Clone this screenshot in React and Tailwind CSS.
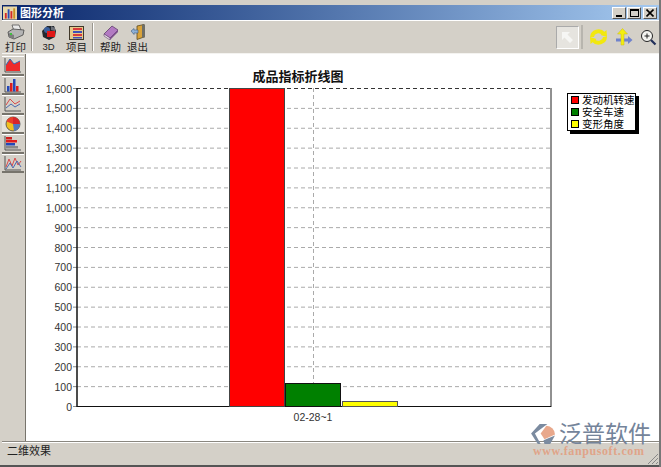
const font = { fontFamily: '"Liberation Sans", "Noto Sans CJK SC", sans-serif' };

const ticks = Array.from({ length: 17 }, (_, i) => i * 100);
const tickY = (v) => 406.5 - (v / 1600) * 318;

const PrintIcon = () => (
  <svg width="18" height="16" viewBox="0 0 18 16">
    <path d="M5 1 L12 1 L14 6 L7 7 Z" fill="#e8e8e8" stroke="#555" strokeWidth="0.8" />
    <path d="M1 8 L6 5 L17 6 L16 11 L7 15 L2 13 Z" fill="#b4b4b4" stroke="#444" strokeWidth="0.8" />
    <path d="M2 9 L7 11 L7 15 L2 13 Z" fill="#7d7d7d" />
    <rect x="3" y="9" width="2" height="2" fill="#3fbf3f" />
  </svg>
);

const CubeIcon = () => (
  <svg width="16" height="15" viewBox="0 0 16 15">
    <path d="M1 6 L6 1 L13 1 L15 6 L14 12 L8 15 L2 12 Z" fill="#24282e" />
    <circle cx="6" cy="5" r="3" fill="#3a5f9c" />
    <rect x="6" y="6" width="8" height="6" fill="#e01818" />
    <path d="M10 1 L14 3 L14 6 L10 5 Z" fill="#6b6f78" />
  </svg>
);

const ItemsIcon = () => (
  <svg width="15" height="14" viewBox="0 0 15 14">
    <rect x="0.5" y="0.5" width="14" height="13" fill="#e6c98a" stroke="#40382a" />
    <rect x="4" y="2" width="9" height="2" fill="#d93a3a" />
    <rect x="4" y="5" width="9" height="2" fill="#3d4fb8" />
    <rect x="4" y="8" width="9" height="2" fill="#d93a3a" />
    <rect x="4" y="11" width="9" height="1.5" fill="#3d4fb8" />
  </svg>
);

const BookIcon = () => (
  <svg width="16" height="15" viewBox="0 0 16 15">
    <path d="M1 9 L9 1 L15 5 L7 13 Z" fill="#b27ac2" stroke="#5f3d6c" strokeWidth="0.8" />
    <path d="M1 9 L7 13 L7 15 L1 11 Z" fill="#efe6f0" stroke="#5f3d6c" strokeWidth="0.6" />
    <path d="M7 13 L15 5 L15 7 L7 15 Z" fill="#7d4e8e" />
  </svg>
);

const ExitIcon = () => (
  <svg width="16" height="16" viewBox="0 0 16 16">
    <path d="M7 2 L14 0.5 L14 13 L7 15.5 Z" fill="#d9a33a" stroke="#5a4a22" strokeWidth="0.8" />
    <rect x="12" y="0.5" width="3" height="13" fill="#6e6e66" />
    <path d="M1 7 L4 4.5 L4 6 L8 6 L8 9 L4 9 L4 10.5 Z" fill="#8fb2d8" stroke="#3d5a80" strokeWidth="0.6" />
  </svg>
);

const ToolButton = ({ icon, label, small }) => (
  <div className="flex h-[31px] w-[21px] flex-col items-center justify-between">
    <div className="flex h-[18px] items-end">{icon}</div>
    <span className={small ? "whitespace-nowrap text-[9.5px] leading-[12px] text-[#222]" : "whitespace-nowrap text-[10.5px] leading-[12px] text-[#222]"}>{label}</span>
  </div>
);

const Divider = () => (
  <div className="mx-[5px] h-[28px] w-[2px] border-l border-r border-l-[#9a968e] border-r-white" />
);

const AreaSide = () => (
  <svg width="18" height="16" viewBox="0 0 18 16">
    <path d="M1 15 L1 1 M1 15 L17 15" stroke="#555" fill="none" />
    <path d="M2 14 L2 8 L6 2 L10 7 L16 4 L16 14 Z" fill="#ee2a2a" />
    <path d="M2 8 L6 2 L10 7 L16 4" stroke="#3468b0" fill="none" />
  </svg>
);
const BarSide = () => (
  <svg width="18" height="16" viewBox="0 0 18 16">
    <path d="M1 15 L1 1 M1 15 L17 15" stroke="#555" fill="none" />
    <rect x="3" y="9" width="2.5" height="5.5" fill="#2448b8" />
    <rect x="6" y="6" width="2.5" height="8.5" fill="#e01c1c" />
    <rect x="9" y="2" width="2.5" height="12.5" fill="#2448b8" />
    <rect x="12" y="9" width="2.5" height="5.5" fill="#e01c1c" />
  </svg>
);
const LineSide = () => (
  <svg width="18" height="16" viewBox="0 0 18 16">
    <path d="M1 15 L1 1 M1 15 L17 15" stroke="#555" fill="none" />
    <path d="M2 9 L6 3 L11 8 L16 5" stroke="#d84a4a" fill="none" />
    <path d="M2 12 L7 8 L11 11 L16 8" stroke="#4a68b0" fill="none" />
  </svg>
);
const PieSide = () => (
  <svg width="16" height="16" viewBox="0 0 16 16">
    <circle cx="8" cy="8" r="7" fill="#f0c020" stroke="#444" strokeWidth="0.8" />
    <path d="M8 8 L8 1 A7 7 0 0 1 15 8 Z" fill="#d8242c" />
    <path d="M8 8 L1.5 5.5 A7 7 0 0 1 8 1 Z" fill="#e8402a" />
    <path d="M8 8 L15 8 A7 7 0 0 1 9 15 Z" fill="#5078c0" />
  </svg>
);
const HBarSide = () => (
  <svg width="18" height="16" viewBox="0 0 18 16">
    <path d="M1 15 L1 1 M1 15 L17 15" stroke="#555" fill="none" />
    <rect x="2" y="2" width="6" height="2.5" fill="#d01c1c" />
    <rect x="2" y="5" width="11" height="2.5" fill="#e01c1c" />
    <rect x="2" y="8" width="9" height="2.5" fill="#2448b8" />
    <rect x="2" y="11" width="12" height="2.5" fill="#888" />
  </svg>
);
const MixSide = () => (
  <svg width="18" height="16" viewBox="0 0 18 16">
    <path d="M1 15 L1 1 M1 15 L17 15" stroke="#555" fill="none" />
    <path d="M2 12 L5 4 L8 11 L11 3 L14 10 L17 6" stroke="#d84a4a" fill="none" />
    <path d="M2 14 L6 8 L9 13 L13 6 L17 12" stroke="#4a68b0" fill="none" />
  </svg>
);

const SideButton = ({ children, active }) => (
  <div className={`flex h-[19.5px] w-[22px] items-center justify-center border-b-2 border-t border-b-[#77746c] border-t-white ${active ? "bg-[#e4e1da]" : ""}`}>
    {children}
  </div>
);

const Chart = () => (
  <svg className="block" width="633" height="388" viewBox="26 54 633 388" style={font}>
    <text x="298" y="81" fontSize="13" fontWeight="700" fill="#111" textAnchor="middle">成品指标折线图</text>
    {ticks.map((v) => (
      <g key={v}>
        <line x1="73" x2="77" y1={tickY(v)} y2={tickY(v)} stroke="#888" />
        <line x1="77" x2="551" y1={tickY(v)} y2={tickY(v)} stroke={v === 1600 || v === 0 ? "#333" : "#aaa"} strokeDasharray="4 3" />
        <text x="72" y={tickY(v) + 4} fontSize="10.5" fill="#333" textAnchor="end">{v.toLocaleString("en-US")}</text>
      </g>
    ))}
    <line x1="313.5" x2="313.5" y1="88" y2="410" stroke="#aaa" strokeDasharray="4 3" />
    <line x1="77" x2="77" y1="88" y2="407" stroke="#111" strokeWidth="1.5" />
    <line x1="551" x2="551" y1="88" y2="407" stroke="#222" />
    <line x1="77" x2="551" y1="406.5" y2="406.5" stroke="#111" strokeWidth="1" />
    <rect x="229.5" y="88.5" width="55" height="318" fill="#ff0000" stroke="#444" />
    <rect x="285.5" y="383.5" width="55" height="23" fill="#008000" stroke="#111" />
    <rect x="342.5" y="401.5" width="55" height="5" fill="#ffff00" stroke="#555" />
    <text x="313" y="421" fontSize="10.5" fill="#333" textAnchor="middle">02-28~1</text>
  </svg>
);

const LegendItem = ({ color, label }) => (
  <div className="flex h-[12px] items-center gap-[3px]">
    <span className="h-[8px] w-[8px] shrink-0 border border-black" style={{ backgroundColor: color }} />
    <span className="whitespace-nowrap text-[10.5px] leading-[12px] text-black">{label}</span>
  </div>
);

export default function App() {
  return (
    <div className="relative h-[467px] w-[661px] overflow-hidden bg-[#d4d0c8] p-[2px] pt-[5px]" style={font}>
      {/* Title bar */}
      <div className="flex h-[15px] items-center justify-between bg-gradient-to-r from-[#0a246a] to-[#a6caf0] pl-[1px] pr-[2px]">
        <div className="flex items-center gap-[3px]">
          <svg width="14" height="14" viewBox="0 0 15 14">
            <rect width="15" height="14" fill="#e8d8a8" />
            <rect x="2" y="7" width="2" height="6" fill="#d42a2a" />
            <rect x="5" y="3" width="2" height="10" fill="#2a4ab8" />
            <rect x="8" y="5" width="2" height="8" fill="#d42a2a" />
            <rect x="11" y="2" width="2" height="11" fill="#c89020" />
          </svg>
          <span className="text-[11px] font-bold leading-[14px] text-white">图形分析</span>
        </div>
        <div className="flex">
          <div className="flex h-[12px] w-[14px] items-end justify-center border border-b-[#555] border-l-white border-r-[#555] border-t-white bg-[#d4d0c8] pb-[1px]">
            <span className="h-[2px] w-[6px] bg-black" />
          </div>
          <div className="ml-[1px] flex h-[12px] w-[14px] items-center justify-center border border-b-[#555] border-l-white border-r-[#555] border-t-white bg-[#d4d0c8]">
            <span className="h-[8px] w-[9px] border border-t-2 border-black" />
          </div>
          <div className="ml-[2px] flex h-[12px] w-[14px] items-center justify-center border border-b-[#555] border-l-white border-r-[#555] border-t-white bg-[#d4d0c8]">
            <svg width="8" height="8" viewBox="0 0 8 8"><path d="M0.5 0.5 L7.5 7.5 M7.5 0.5 L0.5 7.5" stroke="#000" strokeWidth="1.6" /></svg>
          </div>
        </div>
      </div>

      {/* Toolbar */}
      <div className="flex h-[33px] items-center justify-between border-t border-t-white pl-[3px] pr-[2px]">
        <div className="flex items-center">
          <ToolButton icon={<PrintIcon />} label="打印" />
          <Divider />
          <div className="flex gap-[7px]">
            <ToolButton icon={<CubeIcon />} label="3D" small />
            <ToolButton icon={<ItemsIcon />} label="项目" />
          </div>
          <Divider />
          <div className="flex gap-[6px] pl-[1px]">
            <ToolButton icon={<BookIcon />} label="帮助" />
            <ToolButton icon={<ExitIcon />} label="退出" />
          </div>
        </div>
        <div className="flex items-center">
          <div className="flex h-[23px] w-[23px] items-center justify-center border border-b-white border-l-[#aaa] border-r-white border-t-[#aaa] bg-[#e6e4df]">
            <svg width="15" height="15" viewBox="0 0 15 15"><path d="M2 2 L10 2 L7.5 4.5 L13 10 L10 13 L4.5 7.5 L2 10 Z" fill="#f6f6f4" /></svg>
          </div>
          <div className="ml-[2px] mr-[6px] h-[24px] w-[2px] bg-[#b8b5ae]" />
          <div className="flex items-center gap-[7px]">
            <svg width="19" height="16" viewBox="0 0 19 16">
              <path d="M3 8 A6.5 6 0 0 1 14.5 4.5" stroke="#f2e80e" strokeWidth="4" fill="none" />
              <path d="M16 8 A6.5 6 0 0 1 4.5 11.5" stroke="#f2e80e" strokeWidth="4" fill="none" />
              <path d="M17.5 1 L18 8 L11.5 6 Z" fill="#f2e80e" />
              <path d="M1.5 15 L1 8 L7.5 10 Z" fill="#f2e80e" />
            </svg>
            <svg width="18" height="18" viewBox="0 0 18 18">
              <path d="M1 10.5 L13 10.5 L13 8 L17.5 12 L13 16 L13 13.5 L1 13.5 Z" fill="#6f82cc" />
              <path d="M6 17 L6 6 L2.5 6 L7.5 0.5 L12.5 6 L9 6 L9 17 Z" fill="#f4ee10" stroke="#c8b818" strokeWidth="0.5" />
            </svg>
            <svg width="17" height="17" viewBox="0 0 17 17">
              <circle cx="7" cy="7" r="5.5" fill="#f4f4f0" stroke="#222" />
              <path d="M4.5 7 L9.5 7 M7 4.5 L7 9.5" stroke="#222" />
              <path d="M11 11 L15.5 15.5" stroke="#23305a" strokeWidth="2.2" />
            </svg>
          </div>
        </div>
      </div>

      {/* Body */}
      <div className="flex h-[389px] border-b border-t border-b-[#8a8780] border-t-[#f4f3f0]">
        <div className="w-[24px] border-r border-r-[#77746c] pt-[2px]">
          <div className="flex flex-col">
            <SideButton><AreaSide /></SideButton>
            <SideButton><BarSide /></SideButton>
            <SideButton><LineSide /></SideButton>
            <SideButton active><PieSide /></SideButton>
            <SideButton><HBarSide /></SideButton>
            <SideButton><MixSide /></SideButton>
          </div>
        </div>
        <div className="flex-1 bg-white">
          <Chart />
        </div>
      </div>

      {/* Status bar */}
      <div className="flex h-[20px] items-center border-t border-t-white pb-[3px] pl-[5px]">
        <span className="text-[11px] leading-[14px] text-[#222]">二维效果</span>
      </div>

      {/* Legend */}
      <div className="absolute left-[567px] top-[93px] flex h-[38px] w-[69px] flex-col justify-center border border-black bg-white pl-[3px] shadow-[3px_3px_0_#000]">
        <LegendItem color="#ff0000" label="发动机转速" />
        <LegendItem color="#008000" label="安全车速" />
        <LegendItem color="#ffff00" label="变形角度" />
      </div>

      {/* Watermark */}
      <div className="absolute left-[531px] top-[423px] flex w-[130px] flex-col">
        <div className="flex h-[22px] items-center gap-[2px]">
          <svg width="26" height="22" viewBox="0 0 27 23">
            <path d="M9 1 L17 1 L4 11 L10 22 L7 22 L0 11 Z" fill="#7b8ba0" />
            <path d="M16 3 A9 9 0 0 1 25 12 L14 17 L10 11 Z" fill="#e8a88c" />
            <path d="M13 18 L25 13 L20 22 L14 22 Z" fill="#7b8ba0" />
          </svg>
          <span className="text-[23px] font-normal leading-[22px] text-[#74849a]">泛普软件</span>
        </div>
        <span className="ml-[2px] mt-[1px] whitespace-nowrap text-[12px] font-bold leading-[11px] tracking-[0.6px] text-[#e0a488]" style={{ fontFamily: '"Liberation Serif", serif' }}>www.fanpusoft.com</span>
      </div>

      {/* Size grip */}
      <svg className="absolute bottom-[2px] right-[2px]" width="12" height="12" viewBox="0 0 12 12">
        <path d="M11 1 L1 11 M11 5 L5 11 M11 9 L9 11" stroke="#888" />
      </svg>
      <div className="absolute bottom-0 left-0 h-[2px] w-full bg-[#555]" />
      <div className="absolute right-0 top-0 h-full w-[2px] bg-[#777]" />
    </div>
  );
}
